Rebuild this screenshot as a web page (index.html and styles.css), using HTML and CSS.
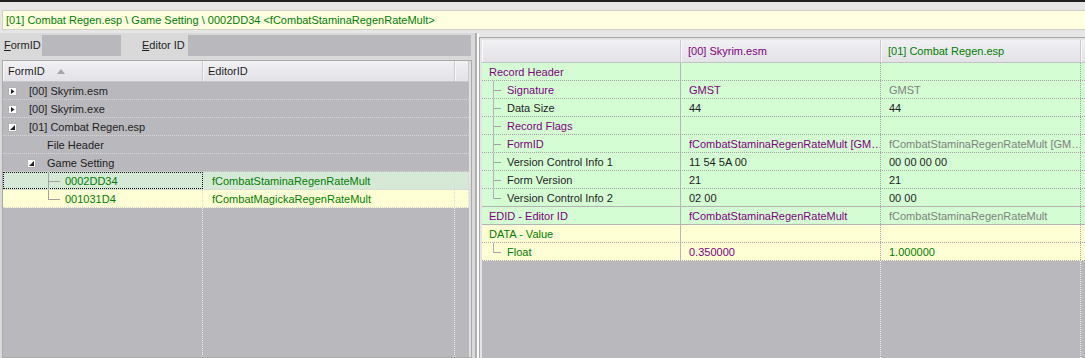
FILE: index.html
```html
<!DOCTYPE html>
<html lang="en">
<head>
    <meta charset="UTF-8">
    <title>TES5Edit - Combat Regen.esp</title>
    <link rel="stylesheet" href="styles.css">
</head>
<body>
    <div class="pathbar">[01] Combat Regen.esp \ Game Setting \ 0002DD34 &lt;fCombatStaminaRegenRateMult&gt;</div>

    <div class="main">
        <!-- navigation tree -->
        <div class="left">
            <div class="filter">
                <label class="flabel"><u>F</u>ormID</label>
                <div class="finput short"></div>
                <label class="flabel wide"><u>E</u>ditor ID</label>
                <div class="finput long"></div>
            </div>

            <div class="tree">
                <div class="tree-head">
                    <div class="hcell">FormID <span class="sort"></span></div>
                    <div class="hcell">EditorID</div>
                    <div class="hcell"></div>
                </div>

                <div class="trow">
                    <div class="node l0">
                        <svg class="exp" viewBox="0 0 9 9"><rect x="0.5" y="0.5" width="8" height="8" fill="#fff" stroke="#b4b4b4"/><polygon points="3,2 6.5,4.5 3,7" fill="#222"/></svg>
                        <span>[00] Skyrim.esm</span>
                    </div>
                </div>
                <div class="trow">
                    <div class="node l0">
                        <svg class="exp" viewBox="0 0 9 9"><rect x="0.5" y="0.5" width="8" height="8" fill="#fff" stroke="#b4b4b4"/><polygon points="3,2 6.5,4.5 3,7" fill="#222"/></svg>
                        <span>[00] Skyrim.exe</span>
                    </div>
                </div>
                <div class="trow">
                    <div class="node l0">
                        <svg class="exp" viewBox="0 0 9 9"><rect x="0.5" y="0.5" width="8" height="8" fill="#fff" stroke="#b4b4b4"/><polygon points="7,2 7,7 2,7" fill="#222"/></svg>
                        <span>[01] Combat Regen.esp</span>
                    </div>
                </div>
                <div class="trow">
                    <div class="node l1">File Header</div>
                </div>
                <div class="trow">
                    <div class="node l1g">
                        <svg class="exp" viewBox="0 0 9 9"><rect x="0.5" y="0.5" width="8" height="8" fill="#fff" stroke="#b4b4b4"/><polygon points="7,2 7,7 2,7" fill="#222"/></svg>
                        <span>Game Setting</span>
                    </div>
                </div>
                <div class="trow rec selected">
                    <div class="cell first focus"><span class="tline"></span><span>0002DD34</span></div>
                    <div class="cell">fCombatStaminaRegenRateMult</div>
                    <div class="cell"></div>
                </div>
                <div class="trow rec override">
                    <div class="cell first"><span class="tline last"></span><span>001031D4</span></div>
                    <div class="cell">fCombatMagickaRegenRateMult</div>
                    <div class="cell"></div>
                </div>

                <div class="tree-empty">
                    <div></div>
                    <div></div>
                    <div></div>
                </div>
            </div>
        </div>

        <div class="splitter"></div>

        <!-- record view -->
        <div class="right">
            <div class="view">
                <div class="view-head">
                    <div class="hcell"></div>
                    <div class="hcell purple">[00] Skyrim.esm</div>
                    <div class="hcell green">[01] Combat Regen.esp</div>
                    <div class="hcell"></div>
                </div>

                <div class="vrow gr">
                    <div class="c1 purple">Record Header</div>
                    <div class="c2"></div>
                    <div class="c3"></div>
                    <div class="c4"></div>
                </div>
                <div class="vrow gr">
                    <div class="c1 child"><span class="vline"></span><span class="purple">Signature</span></div>
                    <div class="c2 purple">GMST</div>
                    <div class="c3 gray">GMST</div>
                    <div class="c4"></div>
                </div>
                <div class="vrow gr">
                    <div class="c1 child"><span class="vline"></span><span>Data Size</span></div>
                    <div class="c2">44</div>
                    <div class="c3">44</div>
                    <div class="c4"></div>
                </div>
                <div class="vrow gr">
                    <div class="c1 child"><span class="vline"></span><span class="purple">Record Flags</span></div>
                    <div class="c2"></div>
                    <div class="c3"></div>
                    <div class="c4"></div>
                </div>
                <div class="vrow gr">
                    <div class="c1 child"><span class="vline"></span><span class="purple">FormID</span></div>
                    <div class="c2 purple">fCombatStaminaRegenRateMult [GM…</div>
                    <div class="c3 gray">fCombatStaminaRegenRateMult [GM…</div>
                    <div class="c4"></div>
                </div>
                <div class="vrow gr">
                    <div class="c1 child"><span class="vline"></span><span>Version Control Info 1</span></div>
                    <div class="c2">11 54 5A 00</div>
                    <div class="c3">00 00 00 00</div>
                    <div class="c4"></div>
                </div>
                <div class="vrow gr">
                    <div class="c1 child"><span class="vline"></span><span>Form Version</span></div>
                    <div class="c2">21</div>
                    <div class="c3">21</div>
                    <div class="c4"></div>
                </div>
                <div class="vrow gr group-end">
                    <div class="c1 child"><span class="vline last"></span><span>Version Control Info 2</span></div>
                    <div class="c2">02 00</div>
                    <div class="c3">00 00</div>
                    <div class="c4"></div>
                </div>
                <div class="vrow gr group-end">
                    <div class="c1 purple">EDID - Editor ID</div>
                    <div class="c2 purple">fCombatStaminaRegenRateMult</div>
                    <div class="c3 gray">fCombatStaminaRegenRateMult</div>
                    <div class="c4"></div>
                </div>
                <div class="vrow yl">
                    <div class="c1 green">DATA - Value</div>
                    <div class="c2"></div>
                    <div class="c3"></div>
                    <div class="c4"></div>
                </div>
                <div class="vrow yl">
                    <div class="c1 child"><span class="vline last"></span><span class="green">Float</span></div>
                    <div class="c2 purple">0.350000</div>
                    <div class="c3 green">1.000000</div>
                    <div class="c4"></div>
                </div>

                <div class="view-empty">
                    <div></div>
                    <div></div>
                    <div></div>
                    <div></div>
                </div>
            </div>
        </div>
    </div>
</body>
</html>
```

FILE: styles.css
```css
* {
    box-sizing: border-box;
}

body {
    margin: 0;
    width: 1085px;
    height: 358px;
    overflow: hidden;
    font-family: "Liberation Sans", Arial, sans-serif;
    font-size: 11px;
    color: #1e1e1e;
    background: #e6e6e6;
    border-top: 2px solid #1f1f1f;
    display: flex;
    flex-direction: column;
}

.purple { color: #800080; }
.green { color: #008000; }
.gray { color: #808080; }

.pathbar {
    margin: 8px 0 0 2px;
    height: 20px;
    line-height: 18px;
    padding-left: 3px;
    background: #ffffe1;
    border: 1px solid #d2d2c2;
    border-right: none;
    color: #008000;
    white-space: nowrap;
}

.main {
    flex: 1;
    display: flex;
    padding-top: 3px;
    min-height: 0;
}

/* left side */
.left {
    width: 475px;
    background: #d9d9d9;
    padding: 0 3px 0 2px;
    display: flex;
    flex-direction: column;
}

.filter {
    height: 27px;
    display: flex;
    align-items: flex-start;
    padding: 2px 1px 0 2px;
}

.flabel {
    width: 38px;
    line-height: 21px;
}

.flabel.wide {
    width: 46px;
    margin-left: 21px;
}

.finput {
    height: 21px;
    background: #b9b8bc;
}

.finput.short {
    width: 79px;
}

.finput.long {
    flex: 1;
}

.tree {
    flex: 1;
    border: 1px solid #a9a9a9;
    background: #e0e0e0;
    display: flex;
    flex-direction: column;
}

.tree-head {
    display: grid;
    grid-template-columns: 200px 252px 14px;
    width: 466px;
    height: 21px;
    background: linear-gradient(#f1f1f4, #e2e2e7);
    border-bottom: 1px solid #c6c6cb;
}

.hcell {
    line-height: 20px;
    padding-left: 5px;
    border-right: 1px solid #cacace;
    box-shadow: inset 1px 0 0 #fafafa;
    white-space: nowrap;
    overflow: hidden;
    display: flex;
    align-items: center;
}

.sort {
    width: 0;
    height: 0;
    margin-left: 12px;
    border-left: 4px solid transparent;
    border-right: 4px solid transparent;
    border-bottom: 5px solid #a6a6a8;
}

.trow {
    display: grid;
    grid-template-columns: 200px 252px 14px;
    width: 466px;
    height: 18px;
    padding-top: 1px;
    line-height: 17px;
    background: #b9b8bc;
    border-bottom: 1px dotted #d6d6d8;
}

.node {
    grid-column: 1 / -1;
    display: flex;
    align-items: center;
    white-space: nowrap;
}

.node.l0 {
    padding-left: 5px;
}

.node.l1 {
    padding-left: 44px;
}

.node.l1g {
    padding-left: 24px;
}

.exp {
    width: 9px;
    height: 9px;
    margin-right: 12px;
}

.node.l1g .exp {
    margin-right: 11px;
}

.trow.rec {
    color: #008000;
    padding-top: 0;
}

.trow.selected {
    background: #d6e9d6;
}

.trow.override {
    background: #ffffd6;
}

.cell {
    padding-left: 9px;
    padding-top: 1px;
    border-right: 1px dotted #dadada;
    white-space: nowrap;
    overflow: hidden;
}

.cell.first {
    padding-left: 0;
    display: flex;
}

.cell.focus {
    outline: 1px dotted #111;
    outline-offset: -1px;
}

.tline {
    position: relative;
    width: 12px;
    height: 18px;
    margin-top: -1px;
    margin-left: 45px;
    margin-right: 5px;
    border-left: 1px solid #a2a2a2;
}

.tline.last {
    height: 10px;
}

.tline::after {
    content: "";
    position: absolute;
    left: 0;
    top: 9px;
    width: 11px;
    border-top: 1px solid #a2a2a2;
}

.tree-empty {
    flex: 1;
    width: 466px;
    display: grid;
    grid-template-columns: 200px 252px 14px;
    background: #b9b8bc;
}

.tree-empty div:nth-child(1),
.tree-empty div:nth-child(2) {
    border-right: 1px dotted #ececec;
}

/* splitter */
.splitter {
    width: 4px;
    border-left: 2px solid #aeaeae;
    background: #fbfbfb;
}

/* right side */
.right {
    flex: 1;
    min-width: 0;
    margin-top: 4px;
    border-top: 1px solid #a8a8a8;
    border-left: 1px solid #a8a8a8;
    padding: 2px 0 0 2px;
    background: #e4e4e4;
    display: flex;
    flex-direction: column;
    overflow: hidden;
}

.view {
    flex: 1;
    display: flex;
    flex-direction: column;
    width: 799px;
}

.view-head {
    display: grid;
    grid-template-columns: 199px 200px 200px 200px;
    height: 23px;
    background: linear-gradient(#f1f1f4, #e2e2e7);
    border-bottom: 1px solid #c2c2c6;
}

.view-head .hcell {
    padding-left: 7px;
    padding-top: 1px;
    line-height: 21px;
}

.vrow {
    display: grid;
    grid-template-columns: 199px 200px 200px 200px;
    height: 18px;
    line-height: 17px;
    border-bottom: 1px dotted #a6a6a6;
}

.vrow.gr {
    background: #d4fdd4;
}

.vrow.yl {
    background: #ffffd5;
}

.vrow.group-end {
    border-bottom: 1px solid #b4b4b4;
}

.vrow > div {
    padding-left: 8px;
    padding-top: 1px;
    white-space: nowrap;
    overflow: hidden;
}

.vrow .c1 {
    padding-left: 7px;
    border-right: 1px solid #b6b6b6;
}

.vrow .c2,
.vrow .c3 {
    border-right: 1px dotted #a6a6a6;
}

.vrow .c1.child {
    display: flex;
    padding-left: 0;
}

.vline {
    position: relative;
    width: 8px;
    height: 18px;
    margin-top: -1px;
    margin-left: 11px;
    margin-right: 6px;
    border-left: 1px solid #b2b2b2;
}

.vline.last {
    height: 10px;
}

.vline::after {
    content: "";
    position: absolute;
    left: 0;
    top: 9px;
    width: 7px;
    border-top: 1px solid #a2a2a2;
}

.view-empty {
    flex: 1;
    display: grid;
    grid-template-columns: 199px 200px 200px 200px;
    background: #b9b8bc;
}

.view-empty div:nth-child(2),
.view-empty div:nth-child(3) {
    border-right: 1px dotted #ececec;
}
```
